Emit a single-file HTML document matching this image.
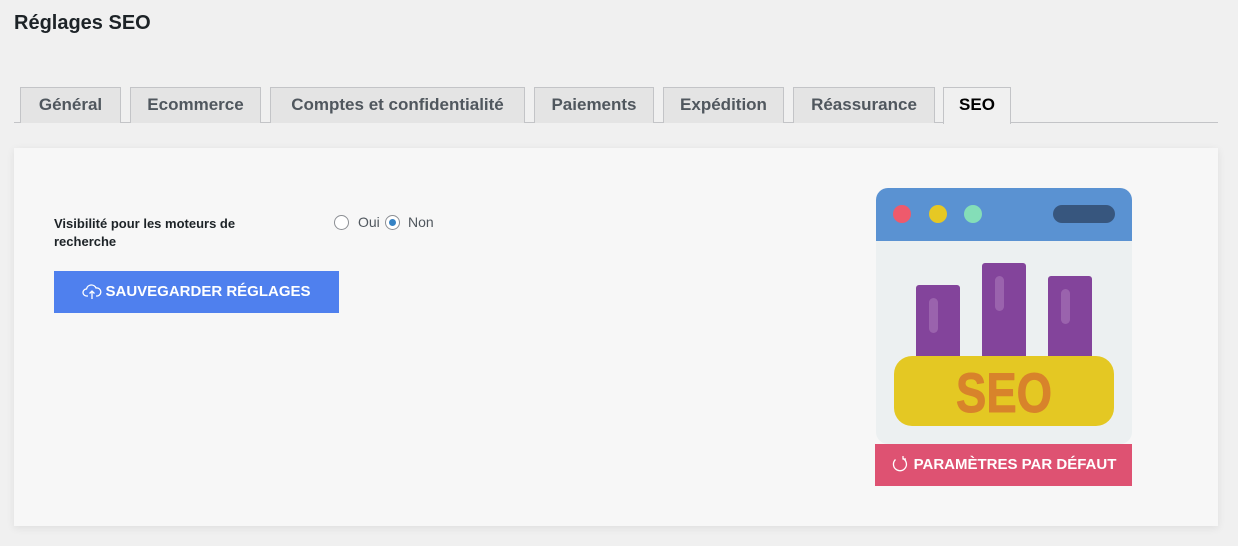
<!DOCTYPE html>
<html><head><meta charset="utf-8"><style>
*{margin:0;padding:0;box-sizing:border-box}
body{width:1238px;height:546px;background:#f0f0f0;font-family:"Liberation Sans",sans-serif;position:relative;overflow:hidden;color:#1d2327}
h1{position:absolute;left:14px;top:12px;font-size:20px;font-weight:bold;color:#1d2327}
.line{position:absolute;left:14px;top:122px;width:1204px;height:1px;background:#c3c4c7}
.tab{position:absolute;top:87px;height:36px;background:#e4e4e4;border:1px solid #c3c4c7;border-bottom:none;font-size:17px;font-weight:bold;color:#50575e;text-align:center;line-height:34px}
.tab.act{background:#f0f0f0;color:#000;height:37px}
.panel{position:absolute;left:14px;top:148px;width:1204px;height:378px;background:#f7f7f7;box-shadow:0 2px 8px rgba(0,0,0,.08)}
.lbl{position:absolute;left:54px;top:215px;font-size:13px;font-weight:bold;line-height:18px;color:#1d2327;width:230px}
.radio{position:absolute;top:215px;width:15px;height:15px;border:1px solid #8c8f94;border-radius:50%;background:#fff}
.rt{position:absolute;top:214px;font-size:14px;color:#50575e}
.btn{position:absolute;color:#fff;font-size:15px;font-weight:bold;text-align:center}
</style></head><body>
<h1>Réglages SEO</h1>
<div class="line"></div>
<div class="tab" style="left:20px;width:101px">Général</div>
<div class="tab" style="left:130px;width:131px">Ecommerce</div>
<div class="tab" style="left:270px;width:255px">Comptes et confidentialité</div>
<div class="tab" style="left:534px;width:120px">Paiements</div>
<div class="tab" style="left:663px;width:121px">Expédition</div>
<div class="tab" style="left:793px;width:142px">Réassurance</div>
<div class="tab act" style="left:943px;width:68px">SEO</div>
<div class="panel"></div>
<div class="lbl">Visibilité pour les moteurs de recherche</div>
<div class="radio" style="left:334px"></div><div class="rt" style="left:358px">Oui</div>
<div class="radio" style="left:385px"><div style="position:absolute;left:3px;top:3px;width:7px;height:7px;border-radius:50%;background:#3582c4"></div></div><div class="rt" style="left:408px">Non</div>
<div class="btn" style="left:54px;top:271px;width:285px;height:42px;background:#4f80ee;line-height:42px">
<svg width="20" height="16" viewBox="0 0 20 16" style="vertical-align:-3px;margin-right:3px" fill="none" stroke="#fff" stroke-width="1.3"><path d="M6 13H4.5A3.5 3.5 0 0 1 4.5 6 5 5 0 0 1 14 5a3.5 3.5 0 0 1 1.5 8H14"/><path d="M10 16V8M7.5 10.5 10 8l2.5 2.5"/></svg>SAUVEGARDER RÉGLAGES</div>
<svg style="position:absolute;left:876px;top:188px" width="256" height="256" viewBox="0 0 256 256">
<rect x="0" y="0" width="256" height="256" rx="12" fill="#ecf0f1"/>
<path d="M12 0h232a12 12 0 0 1 12 12v41H0V12A12 12 0 0 1 12 0z" fill="#5a92d2"/>
<circle cx="26" cy="26" r="9" fill="#ee5a6c"/><circle cx="62" cy="26" r="9" fill="#e6c824"/><circle cx="97" cy="26" r="9" fill="#84deb8"/>
<rect x="177" y="17" width="62" height="18" rx="9" fill="#37567e"/>
<rect x="40" y="97" width="44" height="90" rx="3" fill="#83449b"/>
<rect x="106" y="75" width="44" height="110" rx="3" fill="#83449b"/>
<rect x="172" y="88" width="44" height="100" rx="3" fill="#83449b"/>
<rect x="53" y="110" width="9" height="35" rx="4.5" fill="#9a63ad"/>
<rect x="119" y="88" width="9" height="35" rx="4.5" fill="#9a63ad"/>
<rect x="185" y="101" width="9" height="35" rx="4.5" fill="#9a63ad"/>
<rect x="18" y="168" width="220" height="70" rx="18" fill="#e4c823"/>
<text x="80" y="224" font-family="Liberation Sans" font-weight="bold" font-size="56" fill="#d8832b" textLength="96" lengthAdjust="spacingAndGlyphs" stroke="#d8832b" stroke-width="1" stroke-linejoin="round">SEO</text>
</svg>
<div class="btn" style="left:875px;top:444px;width:257px;height:42px;background:#de5272;line-height:42px">
<svg width="18" height="18" viewBox="0 0 18 18" style="vertical-align:-4px;margin-right:5px" fill="none" stroke="#fff" stroke-width="1.3"><path d="M12 3.5A6.5 6.5 0 1 1 4.5 4.5"/><path d="M12 1v3h3"/></svg>PARAMÈTRES PAR DÉFAUT</div>
</body></html>
